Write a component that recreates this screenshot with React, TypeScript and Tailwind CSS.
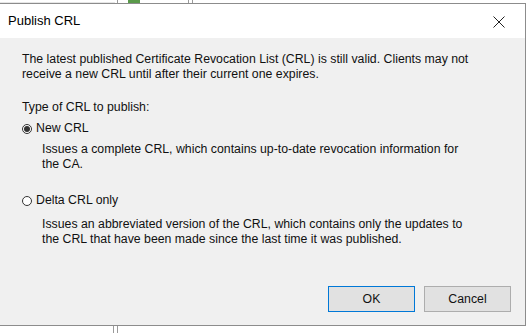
import React, { useState } from 'react';

type CrlType = 'new' | 'delta';

const Radio: React.FC<{ checked: boolean }> = ({ checked }) => (
    <span className="w-[10px] h-[10px] rounded-full border border-[#333333] bg-white flex items-center justify-center shrink-0">
        {checked && <span className="w-[6px] h-[6px] rounded-full bg-[#333333]" />}
    </span>
);

const App: React.FC = () => {
    const [crlType, setCrlType] = useState<CrlType>('new');

    return (
        <div className="w-[532px] h-[333px] bg-white overflow-hidden flex flex-col text-[#111111] font-['Liberation_Sans',Arial,sans-serif]">
            {/* window behind the dialog */}
            <div className="h-[3px] flex items-end shrink-0">
                <div className="w-[115px] h-[1px] bg-[#e6e6e6]" />
                <div className="ml-[2px] w-[1px] h-[3px] bg-[#9a9a9a]" />
                <div className="ml-[10px] w-[12px] h-[3px] bg-[#5a9a4a]" />
                <div className="ml-[48px] w-[1px] h-[3px] bg-[#9a9a9a]" />
                <div className="ml-[3px] w-[1px] h-[3px] bg-[#9a9a9a]" />
            </div>

            <div className="w-[526px] h-[323px] shrink-0 border-t border-r border-b border-[#8c8c8c] flex flex-col">
                <div className="h-[34px] bg-white flex items-center justify-between pl-[8px] pr-[20px] shrink-0">
                    <span className="text-[13px] text-black">Publish CRL</span>
                    <svg width="12" height="12" viewBox="0 0 12 12" className="mt-[1px]">
                        <path d="M0.5 0.5 L11.5 11.5 M11.5 0.5 L0.5 11.5" stroke="#222222" strokeWidth="1" fill="none" />
                    </svg>
                </div>

                <div className="flex-1 bg-[#f0f0f0] px-[22px] pt-[14px] text-[12.3px] leading-[15px] flex flex-col">
                    <p>
                        The latest published Certificate Revocation List (CRL) is still valid. Clients may not
                        <br />
                        receive a new CRL until after their current one expires.
                    </p>

                    <p className="mt-[18px]">Type of CRL to publish:</p>

                    <button
                        className="mt-[6px] flex items-center gap-[4px] text-left"
                        onClick={() => setCrlType('new')}
                    >
                        <Radio checked={crlType === 'new'} />
                        <span>New CRL</span>
                    </button>
                    <p className="mt-[6px] pl-[20px]">
                        Issues a complete CRL, which contains up-to-date revocation information for
                        <br />
                        the CA.
                    </p>

                    <button
                        className="mt-[21px] flex items-center gap-[4px] text-left"
                        onClick={() => setCrlType('delta')}
                    >
                        <Radio checked={crlType === 'delta'} />
                        <span>Delta CRL only</span>
                    </button>
                    <p className="mt-[9px] pl-[20px]">
                        Issues an abbreviated version of the CRL, which contains only the updates to
                        <br />
                        the CRL that have been made since the last time it was published.
                    </p>

                    <div className="mt-auto mb-[13px] mr-[-8px] flex justify-end gap-[9px]">
                        <button className="w-[87px] h-[26px] bg-[#e1e1e1] border border-[#0078d7] text-[12.3px]">
                            OK
                        </button>
                        <button className="w-[87px] h-[26px] bg-[#e1e1e1] border border-[#adadad] text-[12.3px]">
                            Cancel
                        </button>
                    </div>
                </div>
            </div>

            <div className="flex-1 flex">
                <div className="ml-[113px] w-[1px] h-full bg-[#9a9a9a]" />
                <div className="ml-[3px] w-[1px] h-full bg-[#9a9a9a]" />
            </div>
        </div>
    );
};

export default App;
